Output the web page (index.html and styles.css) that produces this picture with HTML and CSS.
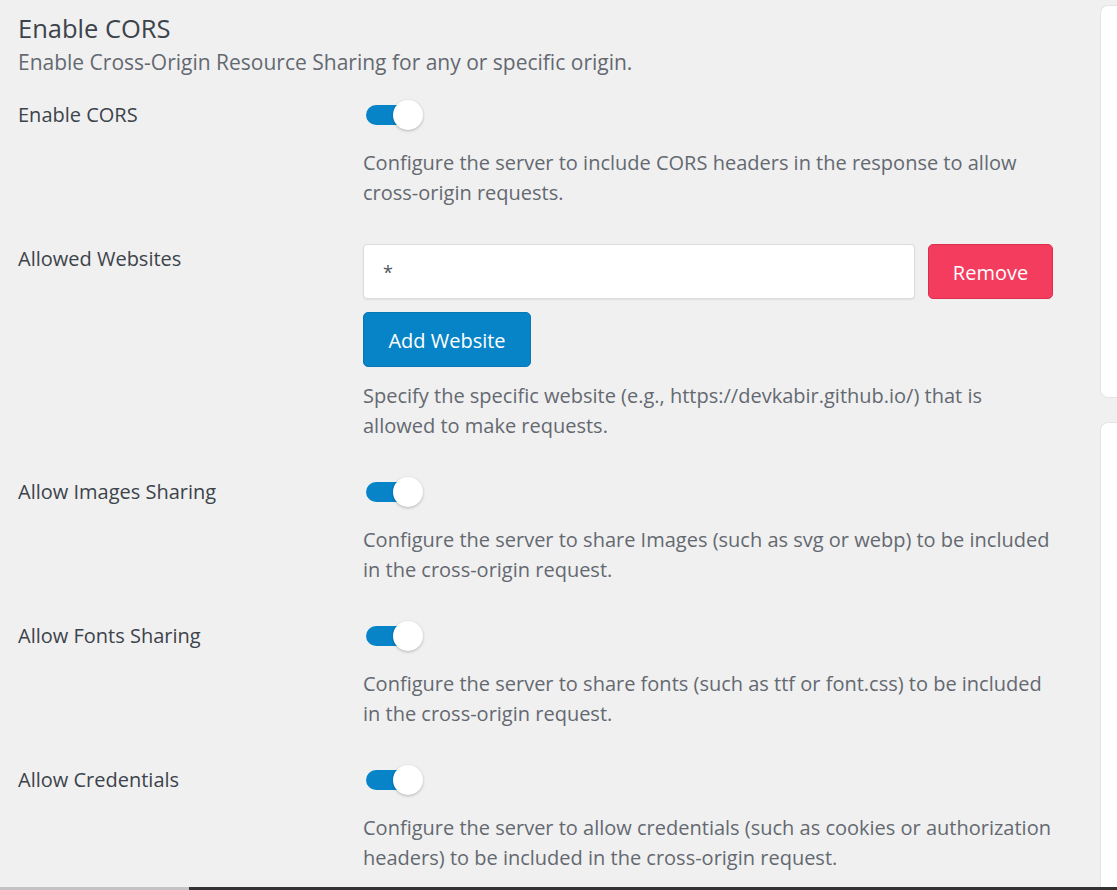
FILE: index.html
```html
<!DOCTYPE html>
<html lang="en">
<head>
<meta charset="utf-8">
<title>Enable CORS</title>
<link rel="stylesheet" href="styles.css">
</head>
<body>
<div class="page">
  <div class="main">
    <div class="content">
      <h2 class="title">Enable CORS</h2>
      <p class="subtitle">Enable Cross-Origin Resource Sharing for any or specific origin.</p>

      <div class="rows">
        <div class="row">
          <div class="label">Enable CORS</div>
          <div class="control">
            <span class="toggle"><span class="track"></span><span class="knob"></span></span>
            <p class="desc desc-toggle">Configure the server to include CORS headers in the response to allow cross-origin requests.</p>
          </div>
        </div>

        <div class="row">
          <div class="label">Allowed Websites</div>
          <div class="control">
            <div class="site-line">
              <div class="input">*</div>
              <button class="btn btn-remove">Remove</button>
            </div>
            <button class="btn btn-add">Add Website</button>
            <p class="desc desc-sites">Specify the specific website (e.g., https://devkabir.github.io/) that is allowed to make requests.</p>
          </div>
        </div>

        <div class="row">
          <div class="label">Allow Images Sharing</div>
          <div class="control">
            <span class="toggle"><span class="track"></span><span class="knob"></span></span>
            <p class="desc desc-toggle">Configure the server to share Images (such as svg or webp) to be included in the cross-origin request.</p>
          </div>
        </div>

        <div class="row">
          <div class="label">Allow Fonts Sharing</div>
          <div class="control">
            <span class="toggle"><span class="track"></span><span class="knob"></span></span>
            <p class="desc desc-toggle">Configure the server to share fonts (such as ttf or font.css) to be included in the cross-origin request.</p>
          </div>
        </div>

        <div class="row">
          <div class="label">Allow Credentials</div>
          <div class="control">
            <span class="toggle"><span class="track"></span><span class="knob"></span></span>
            <p class="desc desc-toggle">Configure the server to allow credentials (such as cookies or authorization headers) to be included in the cross-origin request.</p>
          </div>
        </div>
      </div>
    </div>

    <div class="sidebar">
      <div class="card card-top"></div>
      <div class="card card-bottom"></div>
    </div>
  </div>
  <div class="hscroll"><span class="hscroll-left"></span><span class="hscroll-right"></span></div>
</div>
</body>
</html>
```

FILE: styles.css
```css
* { box-sizing: border-box; }

html, body {
  margin: 0;
  padding: 0;
}

body {
  background: #f0f0f1;
  font-family: "Open Sans", "Noto Sans", "Liberation Sans", sans-serif;
  color: #3c434a;
  overflow: hidden;
}

.page {
  height: 890px;
  display: flex;
  flex-direction: column;
}

.main {
  flex: 1;
  display: flex;
  min-height: 0;
}

.content {
  width: 1060px;
  padding: 11px 0 0 18px;
}

.title {
  margin: 0;
  font-size: 25.5px;
  font-weight: 400;
  line-height: 34px;
  color: #3c434a;
}

.subtitle {
  margin: 2px 0 0;
  font-size: 21px;
  line-height: 30px;
  color: #646970;
}

.rows {
  margin-top: 23px;
  display: flex;
  flex-direction: column;
  gap: 36px;
}

.row {
  display: flex;
}

.label {
  width: 345px;
  flex: none;
  font-size: 20px;
  line-height: 30px;
  color: #3c434a;
}

.control {
  width: 690px;
  display: flex;
  flex-direction: column;
  align-items: flex-start;
}

.toggle {
  position: relative;
  display: block;
  width: 58px;
  height: 30px;
  margin-left: 3px;
}

.track {
  position: absolute;
  left: 0;
  top: 5px;
  width: 52px;
  height: 20px;
  border-radius: 10px;
  background: #0784c7;
}

.knob {
  position: absolute;
  left: 27px;
  top: 0;
  width: 30px;
  height: 30px;
  border-radius: 50%;
  background: #fff;
  box-shadow: 0 1px 3px rgba(0, 0, 0, 0.25);
}

.desc {
  margin: 0;
  font-size: 20px;
  line-height: 30px;
  color: #646970;
}

.desc-toggle {
  margin-top: 18px;
}

.desc-sites {
  margin-top: 14px;
}

.site-line {
  display: flex;
  gap: 13px;
  width: 100%;
}

.input {
  flex: 1;
  height: 55px;
  background: #fff;
  border: 1px solid #dcdcde;
  border-radius: 4px;
  box-shadow: 0 1px 2px rgba(0, 0, 0, 0.07);
  padding: 0 19px;
  font-size: 18px;
  line-height: 55px;
  color: #50575e;
}

.btn {
  height: 55px;
  border: 1px solid transparent;
  border-radius: 5px;
  font-family: inherit;
  font-size: 20px;
  color: #fff;
  cursor: pointer;
  padding: 2px 0 0;
}

.btn-remove {
  width: 125px;
  background: #f43d5e;
  border-color: #dc2f50;
}

.btn-add {
  margin-top: 13px;
  width: 168px;
  background: #0784c7;
  border-color: #0678b6;
}

.sidebar {
  margin-left: auto;
  width: 17px;
  display: flex;
  flex-direction: column;
  gap: 24px;
  padding-top: 5px;
}

.card {
  background: #fff;
  border: 1px solid #e4e4e6;
  border-right: none;
  border-radius: 8px 0 0 8px;
}

.card-top {
  height: 393px;
}

.card-bottom {
  flex: 1;
  border-bottom-left-radius: 0;
  border-bottom: none;
}

.hscroll {
  height: 3px;
  display: flex;
}

.hscroll-left {
  width: 189px;
  background: #c3c3c3;
}

.hscroll-right {
  flex: 1;
  background: #333;
}
```
